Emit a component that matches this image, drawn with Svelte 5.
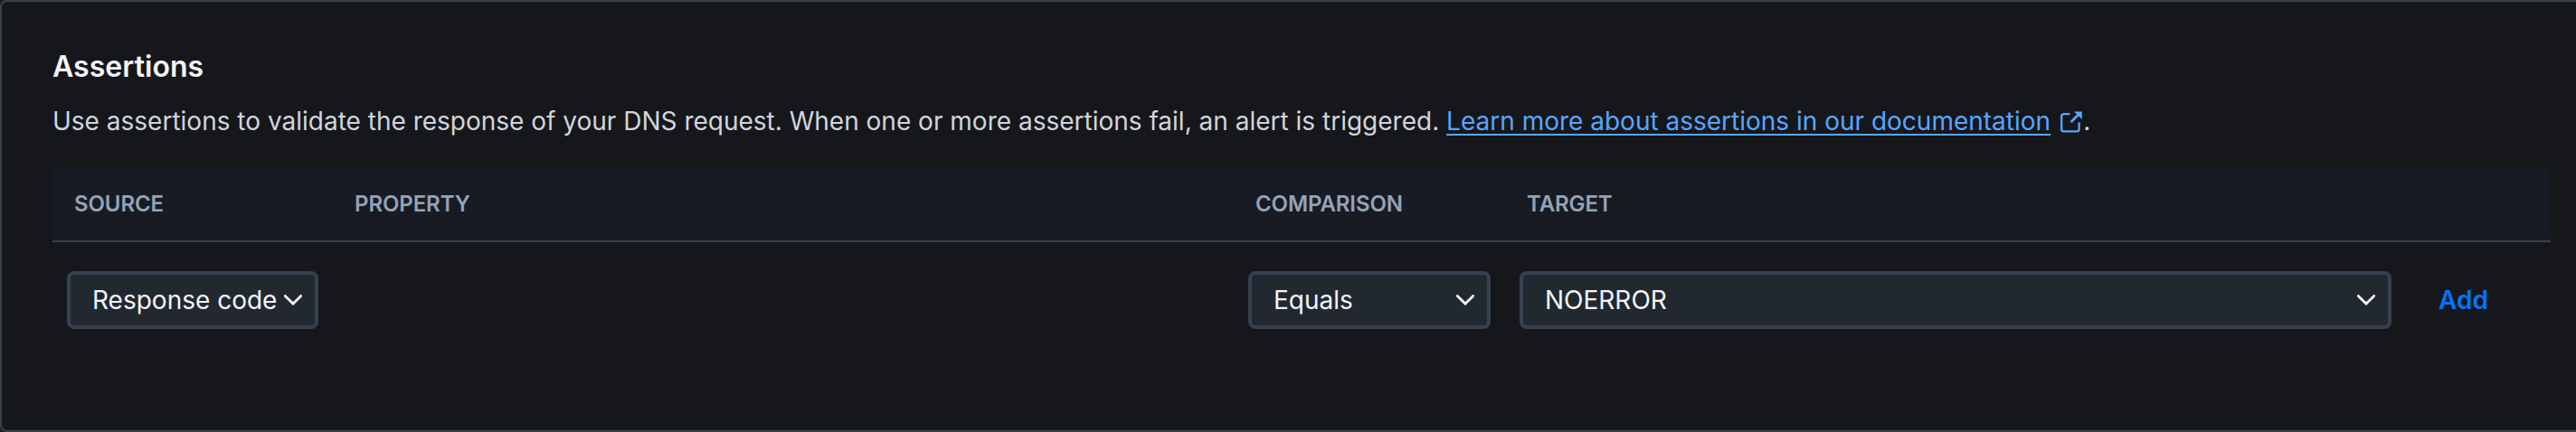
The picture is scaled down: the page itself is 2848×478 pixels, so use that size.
<script>
  const columns = ['Source', 'Property', 'Comparison', 'Target', ''];
</script>

{#snippet picker(label)}
  <button class="select" type="button">
    <span>{label}</span>
    <svg class="chevron" width="20" height="12" viewBox="0 0 20 12" fill="none">
      <path d="M1.3 1.4 10 10.1l8.7-8.7" stroke="currentColor" stroke-width="2.8" stroke-linecap="round" stroke-linejoin="miter" />
    </svg>
  </button>
{/snippet}

<section class="card">
  <h2>Assertions</h2>
  <p>
    Use assertions to validate the response of your DNS request. When one or more assertions fail, an alert is triggered. <a href="#docs"><span class="label">Learn more about assertions in our documentation</span><svg class="external" width="24" height="24" viewBox="0 0 24 24" fill="none"><path d="M10.5 3.2H3.6A2.4 2.4 0 0 0 1.2 5.6v14.4a2.4 2.4 0 0 0 2.4 2.4h14.6a2.4 2.4 0 0 0 2.4-2.4V12.6" stroke="currentColor" stroke-width="2.3" /><path d="M11.6 12 20 3.8" stroke="currentColor" stroke-width="2.8" /><path d="M15 .5H23.8V9Z" fill="currentColor" /></svg></a>.
  </p>
  <div class="row head">
    {#each columns as column}
      <div class="th">{column}</div>
    {/each}
  </div>
  <div class="row body">
    {@render picker('Response code')}
    <div></div>
    {@render picker('Equals')}
    {@render picker('NOERROR')}
    <button class="add" type="button">Add</button>
  </div>
</section>

<style>
  :global(body) {
    background: #1b1d22;
  }
  .card {
    box-sizing: border-box;
    width: 100%;
    height: 478px;
    padding: 48px 28px 0 56px;
    border: 2px solid #364150;
    border-right: 0;
    border-radius: 8px 0 0 8px;
    background: #16171b;
    font-family: Inter, sans-serif;
    font-size: 28px;
    color: #d1d5db;
    overflow: hidden;
  }
  h2 {
    margin: 0 0 15px;
    font-size: 32px;
    line-height: 48px;
    font-weight: 600;
    letter-spacing: 0.05px;
    color: #f3f4f6;
  }
  p {
    margin: 0 0 31px;
    line-height: 42px;
    white-space: nowrap;
  }
  a {
    color: #58a6ff;
    text-decoration: none;
  }
  .label {
    text-decoration: underline;
    text-decoration-thickness: 2px;
    text-underline-offset: 4px;
  }
  .external {
    margin: 0 1px 0 11px;
    vertical-align: -3px;
  }
  .row {
    display: grid;
    grid-template-columns: 310px 996px 300px 996px 160px;
    width: 2762px;
    box-sizing: border-box;
  }
  .head {
    height: 82px;
    align-items: center;
    border-bottom: 2px solid #364150;
    background: #181b23;
    font-size: 24px;
    font-weight: 600;
    letter-spacing: -0.1px;
    color: #94a3b8;
  }
  .th {
    padding-left: 24px;
    line-height: 30px;
    text-transform: uppercase;
  }
  .body {
    padding-top: 32px;
  }
  button {
    margin: 0;
    font: inherit;
    cursor: pointer;
  }
  .select {
    display: flex;
    align-items: center;
    justify-content: space-between;
    height: 64px;
    margin: 0 16px;
    padding: 0 14px 0 24px;
    border: 4px solid #364150;
    border-radius: 8px;
    background: #212830;
    color: #f3f4f6;
    white-space: nowrap;
  }
  .add {
    justify-self: start;
    padding: 0 0 0 36px;
    border: 0;
    background: none;
    color: #0075ff;
    font-weight: 600;
  }
</style>
